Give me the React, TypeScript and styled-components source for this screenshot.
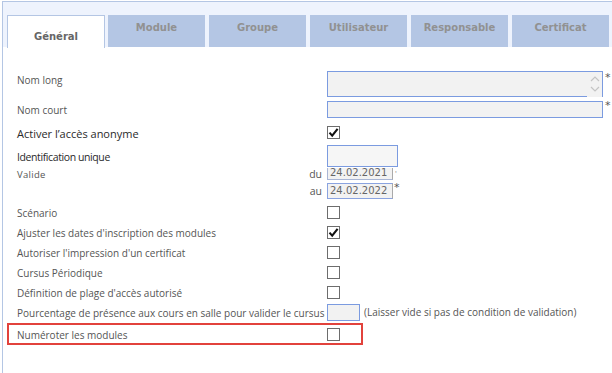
import * as React from 'react'
import styled, { createGlobalStyle } from 'styled-components'

const Global = createGlobalStyle`
    html, body { margin:0; padding:0; background:#fff; }
    body { font-family: "Open Sans", "Noto Sans", sans-serif; }
`

const TABS = ['Général', 'Module', 'Groupe', 'Utilisateur', 'Responsable', 'Certificat']

const Check = ({ on }: { on?: boolean }) => (
    <CheckBox>
        {on && (
            <svg width="11" height="11" viewBox="0 0 11 11">
                <path d="M1.5 5.6 L4.2 8.6 L9.6 1.8" fill="none" stroke="#111" strokeWidth="2.1" strokeLinejoin="miter" />
            </svg>
        )}
    </CheckBox>
)

const Chevron = ({ up }: { up?: boolean }) => (
    <svg width="10" height="6" viewBox="0 0 10 6">
        <path d={up ? 'M1 5 L5 1 L9 5' : 'M1 1 L5 5 L9 1'} fill="none" stroke="#c4c4c4" strokeWidth="1.2" />
    </svg>
)

export default function App() {
    return (
        <Page>
            <Global />
            <TabBand>
                {TABS.map((t, i) => (
                    <Tab key={t} $active={i === 0}>{t}</Tab>
                ))}
            </TabBand>
            <Form>
                <Row $h={28} $top>
                    <Label $pt={2}>Nom long</Label>
                    <TextArea>
                        <AreaField />
                        <AreaScroll>
                            <Chevron up />
                            <Chevron />
                        </AreaScroll>
                    </TextArea>
                    <Star>*</Star>
                </Row>
                <Row $h={20}>
                    <Label>Nom court</Label>
                    <TextInput $w={276} $h={17} />
                    <Star>*</Star>
                </Row>
                <Row $h={26}>
                    <Label $strong>Activer l’accès anonyme</Label>
                    <Check on />
                </Row>
                <Row $h={22}>
                    <Label $strong $tight>Identification unique</Label>
                    <TextInput $w={71} $h={22} $light />
                </Row>
                <Row $h={13}>
                    <LabelCell>
                        <Small>Valide</Small>
                        <Side>du</Side>
                    </LabelCell>
                    <ClippedDate>24.02.2021</ClippedDate>
                    <Tick>'</Tick>
                </Row>
                <Row $h={22}>
                    <LabelCell>
                        <Side>au</Side>
                    </LabelCell>
                    <DateInput>24.02.2022</DateInput>
                    <Star $near>*</Star>
                </Row>
                <Row $h={20}>
                    <Label>Scénario</Label>
                    <Check />
                </Row>
                <Row $h={20}>
                    <Label>Ajuster les dates d'inscription des modules</Label>
                    <Check on />
                </Row>
                <Row $h={20}>
                    <Label>Autoriser l'impression d'un certificat</Label>
                    <Check />
                </Row>
                <Row $h={20}>
                    <Label>Cursus Périodique</Label>
                    <Check />
                </Row>
                <Row $h={20}>
                    <Label>Définition de plage d'accès autorisé</Label>
                    <Check />
                </Row>
                <Row $h={20}>
                    <Label>Pourcentage de présence aux cours en salle pour valider le cursus</Label>
                    <TextInput $w={33} $h={17} />
                    <Hint>(Laisser vide si pas de condition de validation)</Hint>
                </Row>
                <Highlight>
                    <Label>Numéroter les modules</Label>
                    <Check />
                </Highlight>
            </Form>
        </Page>
    )
}

const Page = styled.div`
    margin:1px 0 0 2px;
    height:372px;
    box-sizing:border-box;
    border-top:1px solid #b4c6e4;
    border-left:1px solid #b4c6e4;
`

const TabBand = styled.div`
    display:flex;
    align-items:flex-start;
    gap:4px;
    height:45px;
    box-sizing:border-box;
    padding:13px 0 0 4px;
    background:#eef3fd;
`

const Tab = styled.div<{ $active?: boolean }>`
    flex:0 0 ${p => p.$active ? 98 : 97}px;
    box-sizing:border-box;
    height:${p => p.$active ? 33 : 32}px;
    margin-right:${p => p.$active ? -1 : 0}px;
    padding-top:${p => p.$active ? 14 : 6}px;
    text-align:center;
    font-family:"DejaVu Sans", Verdana, sans-serif;
    font-weight:bold;
    font-size:10px;
    line-height:13px;
    color:${p => p.$active ? '#666' : '#919191'};
    background:${p => p.$active ? '#fff' : '#b4c6e4'};
    border:${p => p.$active ? '1px solid #b4c6e4' : 'none'};
    border-bottom:none;
    position:relative;
    z-index:${p => p.$active ? 1 : 0};
`

const Form = styled.div`
    padding:24px 0 0 4px;
`

const Row = styled.div<{ $h: number; $top?: boolean }>`
    display:flex;
    align-items:${p => p.$top ? 'flex-start' : 'center'};
    height:${p => p.$h}px;
    padding-left:10px;
`

const Label = styled.div<{ $strong?: boolean; $tight?: boolean; $pt?: number }>`
    flex:0 0 310px;
    padding-top:${p => p.$pt ?? 2}px;
    font-size:${p => p.$tight ? 10.5 : p.$strong ? 11 : 10}px;
    letter-spacing:${p => p.$tight ? -0.4 : 0}px;
    line-height:15px;
    color:${p => p.$strong ? '#2a2a2a' : '#555'};
    white-space:nowrap;
`

const LabelCell = styled.div`
    flex:0 0 310px;
    display:flex;
    align-items:center;
    color:#555;
`

const Small = styled.span`
    font-size:9.5px;
    letter-spacing:0.3px;
    padding-top:1px;
`

const Side = styled.span`
    margin-left:auto;
    margin-right:5px;
    font-size:10.5px;
`

const CheckBox = styled.span`
    display:flex;
    align-items:center;
    justify-content:center;
    width:13px;
    height:13px;
    box-sizing:border-box;
    border:1px solid #6d6d6d;
    background:#fff;
`

const TextArea = styled.div`
    display:flex;
    width:276px;
    height:26px;
    box-sizing:border-box;
    border:1px solid #7b9be0;
    border-bottom:none;
`

const AreaField = styled.div`
    flex:1;
    background:#f2f2f2;
    border-bottom:1px solid #7b9be0;
`

const AreaScroll = styled.div`
    width:15px;
    display:flex;
    flex-direction:column;
    align-items:center;
    justify-content:space-around;
    padding:2px 0 3px;
    background:#f2f2f2;
`

const TextInput = styled.div<{ $w: number; $h: number; $light?: boolean }>`
    width:${p => p.$w}px;
    height:${p => p.$h}px;
    box-sizing:border-box;
    border:1px solid #7b9be0;
    background:${p => p.$light ? '#f6f6f6' : '#f2f2f2'};
`

const dateText = `
    font-family:"DejaVu Sans", Verdana, sans-serif;
    font-size:10px;
    color:#666;
    box-sizing:border-box;
    width:66px;
    padding-left:2px;
    background:#f2f2f2;
    white-space:nowrap;
`

const ClippedDate = styled.div`
    ${dateText}
    height:12px;
    overflow:hidden;
    border:1px solid #a9b6d6;
    border-top:none;
    border-right-color:#aaa;
    line-height:10px;
`

const DateInput = styled.div`
    ${dateText}
    height:16px;
    line-height:14px;
    border:1px solid #8aa3e0;
    border-right-color:#aaa;
`

const Tick = styled.span`
    font-size:8px;
    color:#888;
    align-self:flex-start;
    margin-left:2px;
`

const Star = styled.span<{ $near?: boolean }>`
    align-self:flex-start;
    margin-left:${p => p.$near ? 1 : 2}px;
    font-family:"DejaVu Sans", sans-serif;
    font-size:11px;
    line-height:11px;
    margin-top:${p => p.$near ? 2 : 1}px;
    color:#555;
`

const Hint = styled.span`
    margin-left:4px;
    font-size:10px;
    color:#555;
    white-space:nowrap;
`

const Highlight = styled.div`
    display:flex;
    align-items:center;
    width:356px;
    height:22px;
    box-sizing:border-box;
    margin:1px 0 0 0;
    padding-left:8px;
    border:2px solid #e2423c;
`
